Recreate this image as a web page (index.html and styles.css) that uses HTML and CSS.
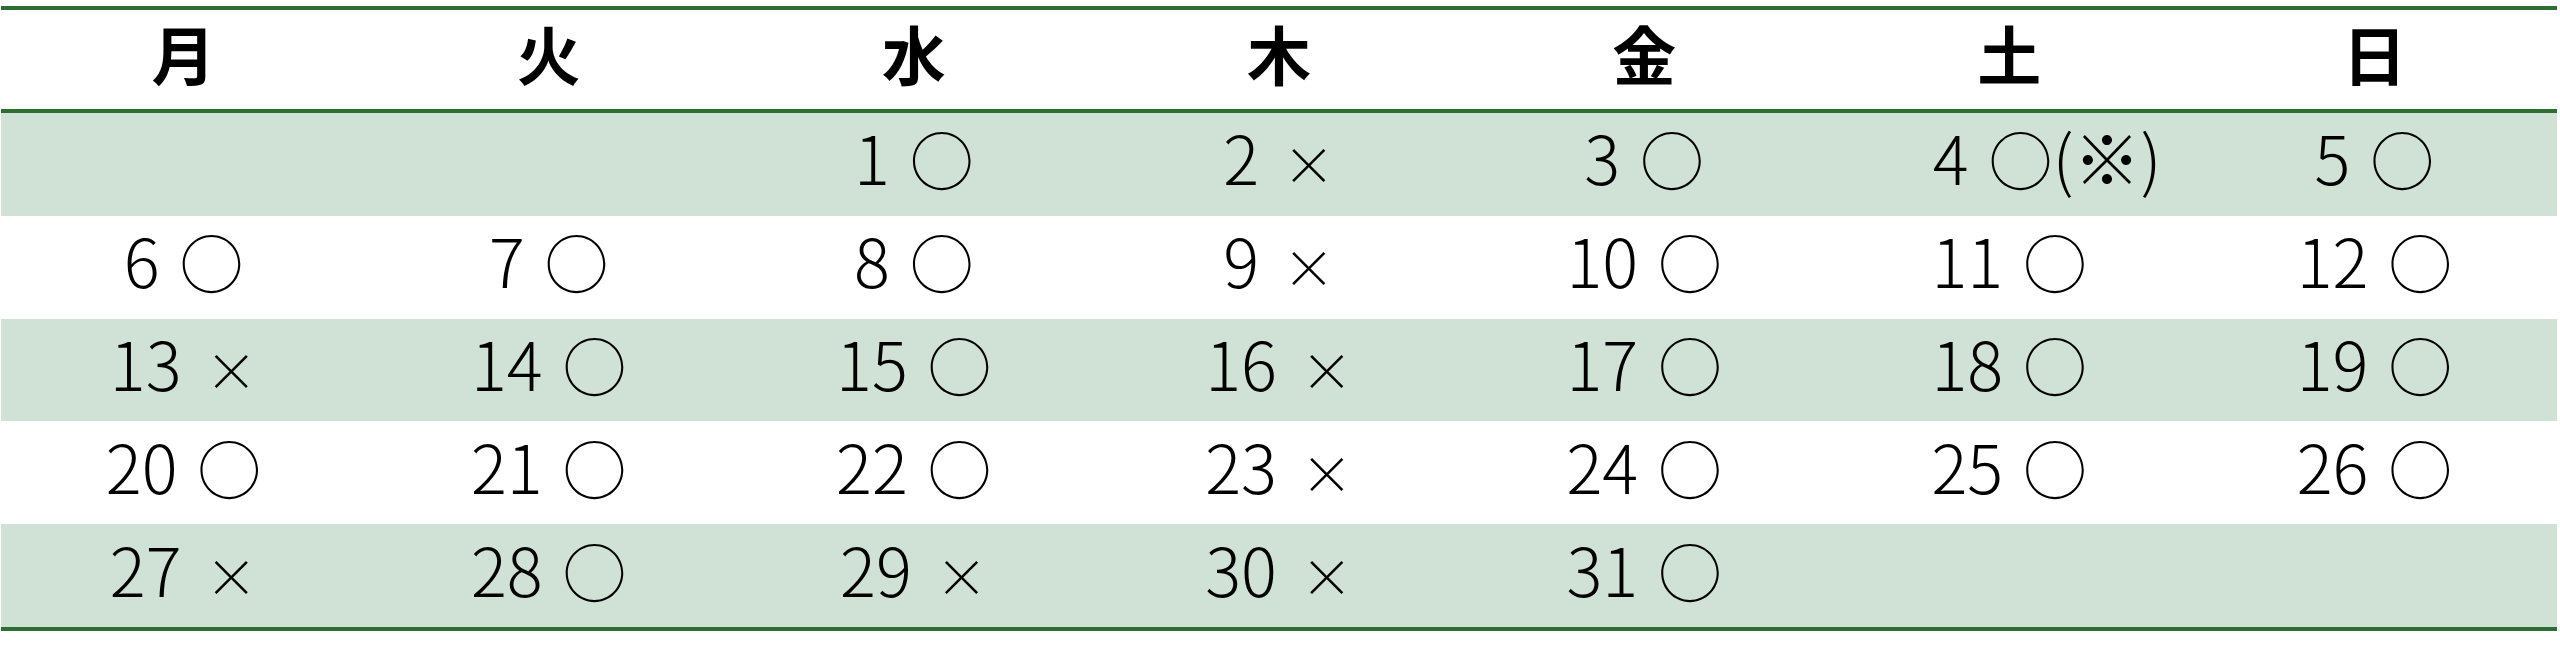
FILE: index.html
```html
<!DOCTYPE html>
<html lang="ja">
<head>
<meta charset="utf-8">
<title>カレンダー</title>
<link rel="stylesheet" href="styles.css">
</head>
<body>
<table class="cal">
  <thead>
    <tr>
      <th>月</th><th>火</th><th>水</th><th>木</th><th>金</th><th>土</th><th>日</th>
    </tr>
  </thead>
  <tbody>
    <tr class="shade">
      <td></td>
      <td></td>
      <td>1 <span class="o">○</span></td>
      <td>2 <span class="x">×</span></td>
      <td>3 <span class="o">○</span></td>
      <td class="note">4 <span class="o">○</span>(※)</td>
      <td>5 <span class="o">○</span></td>
    </tr>
    <tr>
      <td>6 <span class="o">○</span></td>
      <td>7 <span class="o">○</span></td>
      <td>8 <span class="o">○</span></td>
      <td>9 <span class="x">×</span></td>
      <td>10 <span class="o">○</span></td>
      <td>11 <span class="o">○</span></td>
      <td>12 <span class="o">○</span></td>
    </tr>
    <tr class="shade">
      <td>13 <span class="x">×</span></td>
      <td>14 <span class="o">○</span></td>
      <td>15 <span class="o">○</span></td>
      <td>16 <span class="x">×</span></td>
      <td>17 <span class="o">○</span></td>
      <td>18 <span class="o">○</span></td>
      <td>19 <span class="o">○</span></td>
    </tr>
    <tr>
      <td>20 <span class="o">○</span></td>
      <td>21 <span class="o">○</span></td>
      <td>22 <span class="o">○</span></td>
      <td>23 <span class="x">×</span></td>
      <td>24 <span class="o">○</span></td>
      <td>25 <span class="o">○</span></td>
      <td>26 <span class="o">○</span></td>
    </tr>
    <tr class="shade last">
      <td>27 <span class="x">×</span></td>
      <td>28 <span class="o">○</span></td>
      <td>29 <span class="x">×</span></td>
      <td>30 <span class="x">×</span></td>
      <td>31 <span class="o">○</span></td>
      <td></td>
      <td></td>
    </tr>
  </tbody>
</table>
</body>
</html>
```

FILE: styles.css
```css
html, body {
  margin: 0;
  padding: 0;
  background: #ffffff;
}

body {
  font-family: "Noto Sans CJK JP", "Noto Sans", sans-serif;
  color: #000;
}

.cal {
  width: 2556px;
  margin: 6px 0 0 1px;
  border-collapse: separate;
  border-spacing: 0;
  table-layout: fixed;
}

.cal th {
  height: 107px;
  padding: 0 0 16px 0;
  box-sizing: border-box;
  border-top: 4px solid #2d6e33;
  border-bottom: 4px solid #2d6e33;
  font-size: 64px;
  font-weight: 700;
  line-height: 1;
  text-align: center;
  vertical-align: middle;
}

.cal td {
  height: 102.8px;
  padding: 0 0 17px 0;
  box-sizing: border-box;
  font-size: 67px;
  font-weight: 300;
  line-height: 1;
  text-align: center;
  vertical-align: middle;
  white-space: nowrap;
}

.cal tr.shade td {
  background: #d0e2d5;
}

.cal tr.last td {
  height: 106.8px;
  border-bottom: 4px solid #2d6e33;
}

.cal td.note {
  padding-left: 76px;
}

.o {
  margin-left: 5px;
  font-size: 64px;
}

.x {
  margin-left: 9px;
  font-size: 52px;
}
```
